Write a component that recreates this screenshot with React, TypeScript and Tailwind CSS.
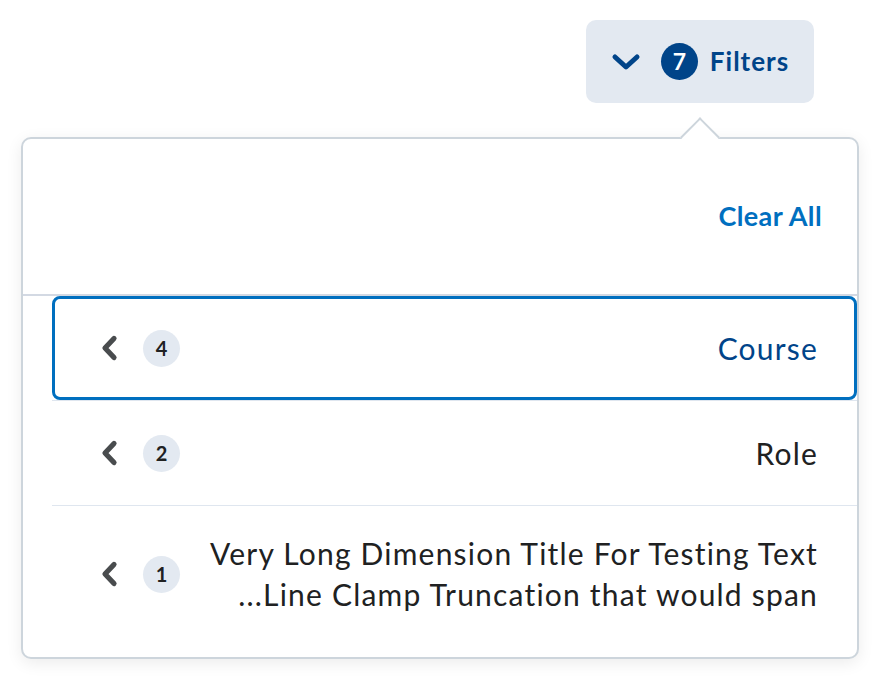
import React from "react";

type Dimension = {
  count: number;
  lines: string[];
  focused?: boolean;
};

const dimensions: Dimension[] = [
  { count: 4, lines: ["Course"], focused: true },
  { count: 2, lines: ["Role"] },
  { count: 1, lines: ["Very Long Dimension Title For Testing Text", "...Line Clamp Truncation that would span"] },
];

function ChevronLeft() {
  return (
    <svg width="20" height="28" viewBox="0 0 20 28" className="shrink-0">
      <path d="M15 4.5 L6 14 L15 23.5" fill="none" stroke="#494c4e" strokeWidth="5.2" strokeLinecap="round" strokeLinejoin="round" />
    </svg>
  );
}

function ChevronDown() {
  return (
    <svg width="30" height="20" viewBox="0 0 30 20" className="shrink-0">
      <path d="M4 5 L15 15 L26 5" fill="none" stroke="#004489" strokeWidth="5" strokeLinecap="round" strokeLinejoin="round" />
    </svg>
  );
}

function DimensionRow({ item, last }: { item: Dimension; last: boolean }) {
  return (
    <div className={last ? "" : "border-b border-[#dfe6ef]"}>
      <div
        className={`flex items-center justify-between rounded-[8px] border-[3px] pl-[44px] pr-[36px] ${
          item.lines.length > 1 ? "pt-[24px] pb-[31px]" : "h-[104px]"
        } ${item.focused ? "border-[#006fbf]" : "border-transparent"}`}
      >
        <div className="flex items-center gap-[24px]">
          <ChevronLeft />
          <span className="flex h-[37px] w-[37px] items-center justify-center rounded-full bg-[#e3e9f1] text-[20px] font-bold text-[#202122]">
            {item.count}
          </span>
        </div>
        <div
          className={`text-right text-[30px] leading-[41px] tracking-[1.2px] ${
            item.focused ? "text-[#004489]" : "text-[#202122]"
          }`}
        >
          {item.lines.map((line) => (
            <p key={line}>{line}</p>
          ))}
        </div>
      </div>
    </div>
  );
}

export default function App() {
  return (
    <div className="min-h-[678px] w-[880px] bg-white font-['Lato',sans-serif]">
      <div className="flex justify-end pr-[66px] pt-[20px]">
        <button
          type="button"
          className="flex h-[83px] w-[228px] items-center justify-center gap-[20px] rounded-[10px] bg-[#e3e9f1]"
        >
          <ChevronDown />
          <span className="flex items-center gap-[12px]">
            <span className="flex h-[37px] w-[37px] items-center justify-center rounded-full bg-[#004489] text-[23px] font-bold text-white">
              7
            </span>
            <span className="text-[26px] font-bold tracking-[1px] text-[#004489]">Filters</span>
          </span>
        </button>
      </div>

      <div className="relative mx-[21px] mt-[34px] rounded-[10px] border-2 border-[#cdd5dc] bg-white pb-[8px] shadow-[0_4px_16px_rgba(0,0,0,0.08)]">
        <div className="absolute -top-[16px] left-[663px] h-[28px] w-[28px] rotate-45 border-l-2 border-t-2 border-[#cdd5dc] bg-white" />
        <div className="relative flex h-[157px] items-center justify-end border-b-2 border-[#d3d9e3] pr-[35px]">
          <button type="button" className="text-[27px] font-bold tracking-[0.4px] text-[#006fbf]">
            Clear All
          </button>
        </div>
        <div className="pl-[29px]">
          {dimensions.map((item, index) => (
            <DimensionRow key={item.count} item={item} last={index === dimensions.length - 1} />
          ))}
        </div>
      </div>
    </div>
  );
}
